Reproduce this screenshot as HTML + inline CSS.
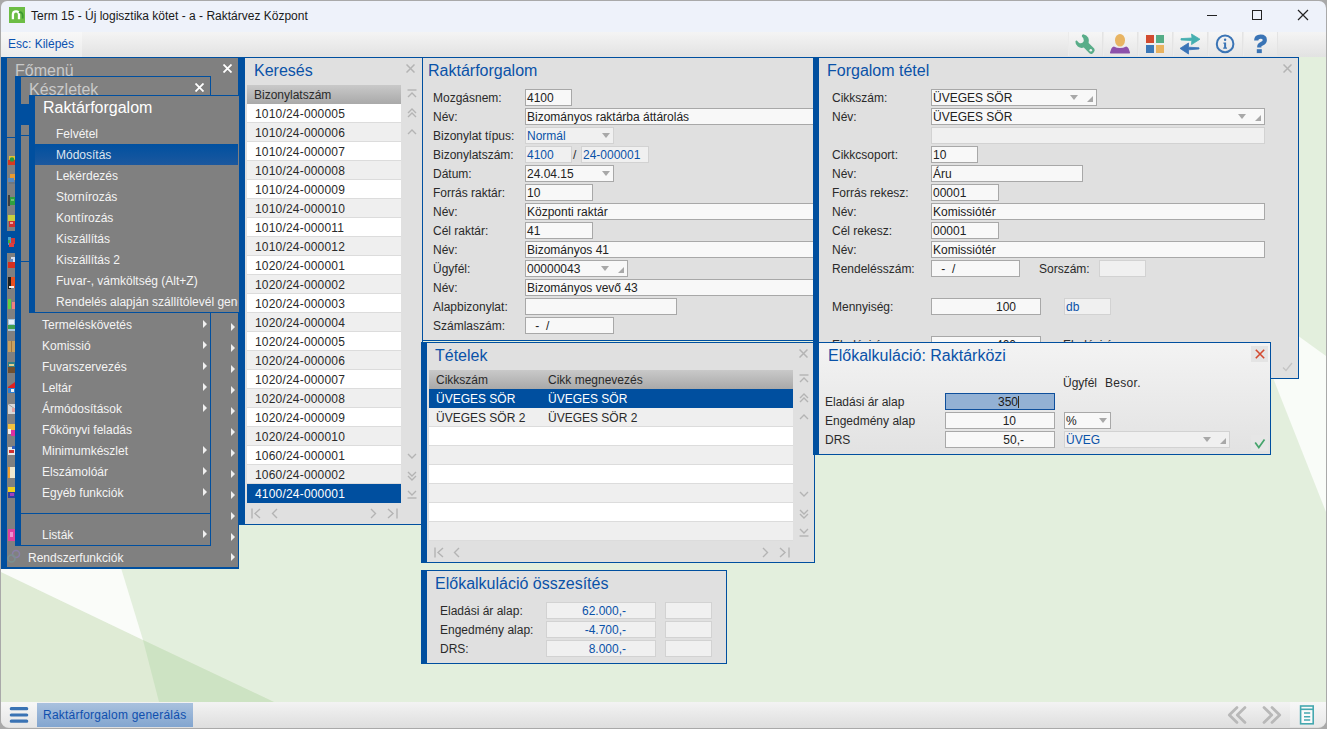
<!DOCTYPE html><html><head><meta charset="utf-8"><style>
html,body{margin:0;padding:0}
body{width:1327px;height:729px;overflow:hidden;position:relative;background:#6d6d6d;font-family:"Liberation Sans",sans-serif;font-size:12px}
div,svg{position:absolute}
.t{white-space:nowrap}
</style></head><body>
<div style="left:0px;top:0px;width:1327px;height:729px;background:#a9a9a9;"></div>
<div style="left:1px;top:1px;width:1325px;height:31px;background:#eef2fa;border-radius:6px 7px 0 0;"></div>
<div style="left:9px;top:7px;width:16px;height:16px;background:#6cbd45;"></div>
<svg style="left:9px;top:7px" width="16" height="16"><path d="M3.9 12.2V7.6Q3.9 4.3 7 4.3Q10 4.3 10 7.6V12.2" stroke="#fff" stroke-width="2.3" fill="none"/><path d="M10.2 6.2Q11 4.8 12.3 5.4Q13.7 6.2 13.7 8.2V11.5" stroke="#3c9a30" stroke-width="1.7" fill="none"/></svg>
<div class="t" style="left:31px;top:8.84px;font-size:12px;line-height:14px;color:#1a1a1a;">Term 15 - Új logisztika kötet - a - Raktárvez Központ</div>
<div style="left:1207px;top:14.6px;width:10px;height:1.3px;background:#222;"></div>
<div style="left:1252px;top:10px;width:10px;height:10px;border:1px solid #222;box-sizing:border-box;"></div>
<svg style="left:1297px;top:9px" width="12" height="12"><path d="M1 1L11 11M11 1L1 11" stroke="#222" stroke-width="1.2"/></svg>
<div style="left:1px;top:32px;width:1325px;height:25px;background:linear-gradient(#f4f4f4,#e2e2e2);"></div>
<div style="left:1px;top:32px;width:81px;height:25px;background:linear-gradient(#f8f8f8,#ebebeb);"></div>
<div class="t" style="left:8px;top:36.84px;font-size:12px;line-height:14px;color:#0b51b0;">Esc: Kilépés</div>
<div style="left:1px;top:57px;width:1325px;height:645px;background:#e3efdd;"></div>
<svg style="left:0;top:0" width="1327" height="729"><path d="M1 572L143 640L274 702L1 702Z" fill="#dfebd5"/><path d="M143 640L159 702L274 702Z" fill="#cde3c3"/><path d="M1 568L121 568L143 640L1 572Z" fill="#fafcf9"/><path d="M1290 330L1326 356L1326 512L1262 350Z" fill="#f9fcf8"/></svg>
<div style="left:1px;top:702px;width:1325px;height:26px;background:linear-gradient(#f3f3f3,#dedede);border-radius:0 0 8px 8px;"></div>
<div style="left:37px;top:703px;width:156px;height:24px;background:linear-gradient(#a9c1de,#82a5cf);"></div>
<div class="t" style="left:43px;top:707.84px;font-size:12px;line-height:14px;color:#0f4fae;letter-spacing:0.22px;">Raktárforgalom generálás</div>
<div style="left:1px;top:57px;width:238px;height:512px;background:#004f9f;"></div>
<div style="left:7px;top:58px;width:231px;height:509px;background:#808080;"></div>
<div class="t" style="left:15px;top:62.46px;font-size:16px;line-height:18px;color:#c9c9c9;">Főmenü</div>
<svg style="left:223px;top:64px" width="9" height="9"><path d="M0.5 0.5L8.5 8.5M8.5 0.5L0.5 8.5" stroke="#ffffff" stroke-width="1.8"/></svg>
<div style="left:7px;top:231px;width:8px;height:22px;background:#004f9f;"></div>
<div style="left:7px;top:137px;width:8px;height:1px;background:#004f9f;"></div>
<svg style="left:8px;top:152px;overflow:hidden" width="7" height="13"><g transform="translate(0,6)"><rect x="1" y="-2" width="6" height="6" fill="#e8c030"/><rect x="0" y="2" width="7" height="5" fill="#d83a20"/><circle cx="4" cy="1.5" r="2.3" fill="#2a9a40"/></g></svg>
<svg style="left:8px;top:173px;overflow:hidden" width="7" height="13"><g transform="translate(0,6)"><rect x="2" y="-5" width="5" height="6" fill="#e89a30"/><rect x="0" y="-1" width="6" height="4" fill="#5a8ac0"/><rect x="1" y="3" width="6" height="2" fill="#707880"/></g></svg>
<svg style="left:8px;top:194px;overflow:hidden" width="7" height="13"><g transform="translate(0,6)"><rect x="0" y="-5" width="2" height="11" fill="#404040"/><rect x="2" y="-3" width="5" height="8" fill="#30a040"/><rect x="3" y="-1" width="3" height="2" fill="#70c070"/></g></svg>
<svg style="left:8px;top:215px;overflow:hidden" width="7" height="13"><g transform="translate(0,6)"><rect x="0" y="-6" width="7" height="6" fill="#c8d040"/><rect x="1" y="0" width="6" height="6" fill="#d03030"/><rect x="2" y="1" width="3" height="2" fill="#f0a0a0"/></g></svg>
<svg style="left:8px;top:236px;overflow:hidden" width="7" height="13"><g transform="translate(0,6)"><rect x="0" y="-5" width="3" height="8" fill="#40a0d0"/><rect x="3" y="-4" width="4" height="6" fill="#d03838"/><rect x="1" y="1" width="5" height="4" fill="#e04040"/><rect x="0" y="-2" width="2" height="3" fill="#40b040"/></g></svg>
<svg style="left:8px;top:257px;overflow:hidden" width="7" height="13"><g transform="translate(0,6)"><rect x="3" y="-6" width="4" height="6" fill="#d8e0f0"/><rect x="0" y="-1" width="7" height="6" fill="#d83020"/><rect x="2" y="-4" width="3" height="3" fill="#7090c0"/></g></svg>
<svg style="left:8px;top:277px;overflow:hidden" width="7" height="13"><g transform="translate(0,6)"><rect x="0" y="-6" width="3" height="12" fill="#202020"/><rect x="3" y="-6" width="4" height="11" fill="#e85020"/><rect x="1" y="3" width="5" height="2" fill="#f0f0f0"/></g></svg>
<svg style="left:8px;top:298px;overflow:hidden" width="7" height="13"><g transform="translate(0,6)"><rect x="0" y="-5" width="3" height="10" fill="#60d040"/><rect x="4" y="-2" width="3" height="7" fill="#f08080"/></g></svg>
<svg style="left:8px;top:319px;overflow:hidden" width="7" height="13"><g transform="translate(0,6)"><rect x="0" y="-6" width="7" height="12" fill="#a8c8e0"/><rect x="0" y="0" width="7" height="4" fill="#40a050"/><rect x="1" y="-5" width="5" height="4" fill="#e8f0f8"/></g></svg>
<svg style="left:8px;top:340px;overflow:hidden" width="7" height="13"><g transform="translate(0,6)"><rect x="0" y="-5" width="7" height="11" fill="#c8a060"/><rect x="3" y="-5" width="1" height="11" fill="#a07840"/></g></svg>
<svg style="left:8px;top:361px;overflow:hidden" width="7" height="13"><g transform="translate(0,6)"><rect x="0" y="-5" width="7" height="5" fill="#30808a"/><rect x="0" y="0" width="7" height="6" fill="#705030"/><rect x="1" y="-3" width="5" height="2" fill="#e0d090"/></g></svg>
<svg style="left:8px;top:382px;overflow:hidden" width="7" height="13"><g transform="translate(0,6)"><path d="M0 -1L7 -6V1H0Z" fill="#e02020"/><rect x="0" y="0" width="7" height="5" fill="#3080d0"/><rect x="3" y="1" width="3" height="3" fill="#f0f0f0"/></g></svg>
<svg style="left:8px;top:403px;overflow:hidden" width="7" height="13"><g transform="translate(0,6)"><rect x="0" y="-5" width="7" height="10" fill="#d8d8d8"/><path d="M0 -5L7 0" stroke="#a0a0a0" stroke-width="1"/><rect x="4" y="-1" width="3" height="4" fill="#e0a0a0"/></g></svg>
<svg style="left:8px;top:424px;overflow:hidden" width="7" height="13"><g transform="translate(0,6)"><rect x="0" y="-6" width="7" height="6" fill="#f0c040"/><rect x="3" y="0" width="4" height="6" fill="#e030a0"/><rect x="0" y="-1" width="3" height="5" fill="#f0f0f0"/></g></svg>
<svg style="left:8px;top:445px;overflow:hidden" width="7" height="13"><g transform="translate(0,6)"><rect x="0" y="-4" width="7" height="8" fill="#e8e8e8"/><rect x="1" y="-1" width="5" height="3" fill="#d03030"/><rect x="4" y="-5" width="3" height="3" fill="#3060c0"/></g></svg>
<svg style="left:8px;top:466px;overflow:hidden" width="7" height="13"><g transform="translate(0,6)"><rect x="0" y="-5" width="7" height="11" fill="#f0e8d0"/><rect x="0" y="-5" width="2" height="11" fill="#f0a030"/></g></svg>
<svg style="left:8px;top:487px;overflow:hidden" width="7" height="13"><g transform="translate(0,6)"><rect x="0" y="-6" width="7" height="5" fill="#f0d020"/><rect x="0" y="-1" width="7" height="6" fill="#3040a0"/><rect x="2" y="0" width="4" height="3" fill="#a040c0"/></g></svg>
<svg style="left:8px;top:529px;overflow:hidden" width="7" height="13"><g transform="translate(0,6)"><rect x="0" y="-6" width="7" height="12" fill="#e040a0"/><rect x="2" y="-3" width="3" height="5" fill="#f090d0"/></g></svg>
<svg style="left:231px;top:323px" width="4" height="8"><path d="M0 0L4 4L0 8Z" fill="#f0f0f0"/></svg>
<svg style="left:231px;top:344px" width="4" height="8"><path d="M0 0L4 4L0 8Z" fill="#f0f0f0"/></svg>
<svg style="left:231px;top:365px" width="4" height="8"><path d="M0 0L4 4L0 8Z" fill="#f0f0f0"/></svg>
<svg style="left:231px;top:386px" width="4" height="8"><path d="M0 0L4 4L0 8Z" fill="#f0f0f0"/></svg>
<svg style="left:231px;top:407px" width="4" height="8"><path d="M0 0L4 4L0 8Z" fill="#f0f0f0"/></svg>
<svg style="left:231px;top:428px" width="4" height="8"><path d="M0 0L4 4L0 8Z" fill="#f0f0f0"/></svg>
<svg style="left:231px;top:449px" width="4" height="8"><path d="M0 0L4 4L0 8Z" fill="#f0f0f0"/></svg>
<svg style="left:231px;top:470px" width="4" height="8"><path d="M0 0L4 4L0 8Z" fill="#f0f0f0"/></svg>
<svg style="left:231px;top:491px" width="4" height="8"><path d="M0 0L4 4L0 8Z" fill="#f0f0f0"/></svg>
<svg style="left:231px;top:512px" width="4" height="8"><path d="M0 0L4 4L0 8Z" fill="#f0f0f0"/></svg>
<svg style="left:231px;top:533px" width="4" height="8"><path d="M0 0L4 4L0 8Z" fill="#f0f0f0"/></svg>
<svg style="left:231px;top:553px" width="4" height="8"><path d="M0 0L4 4L0 8Z" fill="#f0f0f0"/></svg>
<svg style="left:7px;top:549px" width="14" height="14"><circle cx="9" cy="5" r="3.5" fill="none" stroke="#8a80a8" stroke-width="1.5"/><circle cx="4.5" cy="9.5" r="3.5" fill="none" stroke="#7a9090" stroke-width="1.5"/></svg>
<div class="t" style="left:28px;top:550.84px;font-size:12px;line-height:14px;color:#f4f4f4;">Rendszerfunkciók</div>
<div style="left:15px;top:76px;width:196px;height:470px;background:#004f9f;"></div>
<div style="left:21px;top:77px;width:189px;height:468px;background:#808080;"></div>
<div class="t" style="left:29px;top:81.46px;font-size:16px;line-height:18px;color:#c9c9c9;">Készletek</div>
<svg style="left:195px;top:83px" width="9" height="9"><path d="M0.5 0.5L8.5 8.5M8.5 0.5L0.5 8.5" stroke="#ffffff" stroke-width="1.8"/></svg>
<div style="left:21px;top:104px;width:8px;height:21px;background:#004f9f;"></div>
<div style="left:21px;top:135px;width:8px;height:1px;background:#004f9f;"></div>
<div style="left:21px;top:261px;width:189px;height:1px;background:#004f9f;"></div>
<div class="t" style="left:42px;top:317.84px;font-size:12px;line-height:14px;color:#f4f4f4;">Termeléskövetés</div>
<svg style="left:203px;top:320px" width="4" height="8"><path d="M0 0L4 4L0 8Z" fill="#f0f0f0"/></svg>
<div class="t" style="left:42px;top:338.84px;font-size:12px;line-height:14px;color:#f4f4f4;">Komissió</div>
<svg style="left:203px;top:341px" width="4" height="8"><path d="M0 0L4 4L0 8Z" fill="#f0f0f0"/></svg>
<div class="t" style="left:42px;top:359.84px;font-size:12px;line-height:14px;color:#f4f4f4;">Fuvarszervezés</div>
<svg style="left:203px;top:362px" width="4" height="8"><path d="M0 0L4 4L0 8Z" fill="#f0f0f0"/></svg>
<div class="t" style="left:42px;top:380.84px;font-size:12px;line-height:14px;color:#f4f4f4;">Leltár</div>
<svg style="left:203px;top:383px" width="4" height="8"><path d="M0 0L4 4L0 8Z" fill="#f0f0f0"/></svg>
<div class="t" style="left:42px;top:401.84px;font-size:12px;line-height:14px;color:#f4f4f4;">Ármódosítások</div>
<svg style="left:203px;top:404px" width="4" height="8"><path d="M0 0L4 4L0 8Z" fill="#f0f0f0"/></svg>
<div class="t" style="left:42px;top:422.84px;font-size:12px;line-height:14px;color:#f4f4f4;">Főkönyvi feladás</div>
<div class="t" style="left:42px;top:443.84px;font-size:12px;line-height:14px;color:#f4f4f4;">Minimumkészlet</div>
<svg style="left:203px;top:446px" width="4" height="8"><path d="M0 0L4 4L0 8Z" fill="#f0f0f0"/></svg>
<div class="t" style="left:42px;top:464.84px;font-size:12px;line-height:14px;color:#f4f4f4;">Elszámolóár</div>
<svg style="left:203px;top:467px" width="4" height="8"><path d="M0 0L4 4L0 8Z" fill="#f0f0f0"/></svg>
<div class="t" style="left:42px;top:485.84px;font-size:12px;line-height:14px;color:#f4f4f4;">Egyéb funkciók</div>
<svg style="left:203px;top:488px" width="4" height="8"><path d="M0 0L4 4L0 8Z" fill="#f0f0f0"/></svg>
<div class="t" style="left:42px;top:527.84px;font-size:12px;line-height:14px;color:#f4f4f4;">Listák</div>
<svg style="left:203px;top:530px" width="4" height="8"><path d="M0 0L4 4L0 8Z" fill="#f0f0f0"/></svg>
<div style="left:21px;top:513px;width:189px;height:1px;background:#004f9f;"></div>
<div style="left:29px;top:95px;width:210px;height:218px;background:#004f9f;"></div>
<div style="left:35px;top:96px;width:204px;height:216px;background:#808080;"></div>
<div class="t" style="left:43px;top:99.46px;font-size:16px;line-height:18px;color:#ffffff;">Raktárforgalom</div>
<div style="left:35px;top:144px;width:204px;height:21px;background:linear-gradient(#0050a0,#1c589e);"></div>
<div style="left:35px;top:96px;width:204px;height:216px;overflow:hidden">
<div class="t" style="left:21px;top:30.84px;font-size:12px;line-height:14px;color:#f4f4f4">Felvétel</div>
<div class="t" style="left:21px;top:51.84px;font-size:12px;line-height:14px;color:#dfe6f0">Módosítás</div>
<div class="t" style="left:21px;top:72.84px;font-size:12px;line-height:14px;color:#f4f4f4">Lekérdezés</div>
<div class="t" style="left:21px;top:93.84px;font-size:12px;line-height:14px;color:#f4f4f4">Stornírozás</div>
<div class="t" style="left:21px;top:114.84px;font-size:12px;line-height:14px;color:#f4f4f4">Kontírozás</div>
<div class="t" style="left:21px;top:135.84px;font-size:12px;line-height:14px;color:#f4f4f4">Kiszállítás</div>
<div class="t" style="left:21px;top:156.84px;font-size:12px;line-height:14px;color:#f4f4f4">Kiszállítás 2</div>
<div class="t" style="left:21px;top:177.84px;font-size:12px;line-height:14px;color:#f4f4f4">Fuvar-, vámköltség (Alt+Z)</div>
<div class="t" style="left:21px;top:198.84px;font-size:12px;line-height:14px;color:#f4f4f4">Rendelés alapján szállítólevél generálás</div>
</div>
<div style="left:238px;top:57px;width:185px;height:468px;background:#004f9f;"></div>
<div style="left:245px;top:58px;width:177px;height:466px;background:#e0e0e0;"></div>
<div style="left:238px;top:96px;width:1px;height:216px;background:#808080;"></div>
<div class="t" style="left:254px;top:62.46px;font-size:16px;line-height:18px;color:#0a52a8;">Keresés</div>
<svg style="left:406px;top:64px" width="9" height="9"><path d="M0.5 0.5L8.5 8.5M8.5 0.5L0.5 8.5" stroke="#b4b4b4" stroke-width="1.5"/></svg>
<div style="left:247px;top:85px;width:154px;height:19px;background:linear-gradient(#c9c9c9,#a9a9a9);"></div>
<div class="t" style="left:254px;top:87.84px;font-size:12px;line-height:14px;color:#2a2a2a;">Bizonylatszám</div>
<div style="left:247px;top:104px;width:154px;height:19px;background:#ffffff;border-bottom:1px solid #dcdcdc;box-sizing:border-box;"></div>
<div class="t" style="left:255px;top:106.84px;font-size:12px;line-height:14px;color:#2a2a2a;letter-spacing:0.19px;">1010/24-000005</div>
<div style="left:247px;top:123px;width:154px;height:19px;background:#efefef;border-bottom:1px solid #dcdcdc;box-sizing:border-box;"></div>
<div class="t" style="left:255px;top:125.84px;font-size:12px;line-height:14px;color:#2a2a2a;letter-spacing:0.19px;">1010/24-000006</div>
<div style="left:247px;top:142px;width:154px;height:19px;background:#ffffff;border-bottom:1px solid #dcdcdc;box-sizing:border-box;"></div>
<div class="t" style="left:255px;top:144.84px;font-size:12px;line-height:14px;color:#2a2a2a;letter-spacing:0.19px;">1010/24-000007</div>
<div style="left:247px;top:161px;width:154px;height:19px;background:#efefef;border-bottom:1px solid #dcdcdc;box-sizing:border-box;"></div>
<div class="t" style="left:255px;top:163.84px;font-size:12px;line-height:14px;color:#2a2a2a;letter-spacing:0.19px;">1010/24-000008</div>
<div style="left:247px;top:180px;width:154px;height:19px;background:#ffffff;border-bottom:1px solid #dcdcdc;box-sizing:border-box;"></div>
<div class="t" style="left:255px;top:182.84px;font-size:12px;line-height:14px;color:#2a2a2a;letter-spacing:0.19px;">1010/24-000009</div>
<div style="left:247px;top:199px;width:154px;height:19px;background:#efefef;border-bottom:1px solid #dcdcdc;box-sizing:border-box;"></div>
<div class="t" style="left:255px;top:201.84px;font-size:12px;line-height:14px;color:#2a2a2a;letter-spacing:0.19px;">1010/24-000010</div>
<div style="left:247px;top:218px;width:154px;height:19px;background:#ffffff;border-bottom:1px solid #dcdcdc;box-sizing:border-box;"></div>
<div class="t" style="left:255px;top:220.84px;font-size:12px;line-height:14px;color:#2a2a2a;letter-spacing:0.19px;">1010/24-000011</div>
<div style="left:247px;top:237px;width:154px;height:19px;background:#efefef;border-bottom:1px solid #dcdcdc;box-sizing:border-box;"></div>
<div class="t" style="left:255px;top:239.84px;font-size:12px;line-height:14px;color:#2a2a2a;letter-spacing:0.19px;">1010/24-000012</div>
<div style="left:247px;top:256px;width:154px;height:19px;background:#ffffff;border-bottom:1px solid #dcdcdc;box-sizing:border-box;"></div>
<div class="t" style="left:255px;top:258.84px;font-size:12px;line-height:14px;color:#2a2a2a;letter-spacing:0.19px;">1020/24-000001</div>
<div style="left:247px;top:275px;width:154px;height:19px;background:#efefef;border-bottom:1px solid #dcdcdc;box-sizing:border-box;"></div>
<div class="t" style="left:255px;top:277.84px;font-size:12px;line-height:14px;color:#2a2a2a;letter-spacing:0.19px;">1020/24-000002</div>
<div style="left:247px;top:294px;width:154px;height:19px;background:#ffffff;border-bottom:1px solid #dcdcdc;box-sizing:border-box;"></div>
<div class="t" style="left:255px;top:296.84px;font-size:12px;line-height:14px;color:#2a2a2a;letter-spacing:0.19px;">1020/24-000003</div>
<div style="left:247px;top:313px;width:154px;height:19px;background:#efefef;border-bottom:1px solid #dcdcdc;box-sizing:border-box;"></div>
<div class="t" style="left:255px;top:315.84px;font-size:12px;line-height:14px;color:#2a2a2a;letter-spacing:0.19px;">1020/24-000004</div>
<div style="left:247px;top:332px;width:154px;height:19px;background:#ffffff;border-bottom:1px solid #dcdcdc;box-sizing:border-box;"></div>
<div class="t" style="left:255px;top:334.84px;font-size:12px;line-height:14px;color:#2a2a2a;letter-spacing:0.19px;">1020/24-000005</div>
<div style="left:247px;top:351px;width:154px;height:19px;background:#efefef;border-bottom:1px solid #dcdcdc;box-sizing:border-box;"></div>
<div class="t" style="left:255px;top:353.84px;font-size:12px;line-height:14px;color:#2a2a2a;letter-spacing:0.19px;">1020/24-000006</div>
<div style="left:247px;top:370px;width:154px;height:19px;background:#ffffff;border-bottom:1px solid #dcdcdc;box-sizing:border-box;"></div>
<div class="t" style="left:255px;top:372.84px;font-size:12px;line-height:14px;color:#2a2a2a;letter-spacing:0.19px;">1020/24-000007</div>
<div style="left:247px;top:389px;width:154px;height:19px;background:#efefef;border-bottom:1px solid #dcdcdc;box-sizing:border-box;"></div>
<div class="t" style="left:255px;top:391.84px;font-size:12px;line-height:14px;color:#2a2a2a;letter-spacing:0.19px;">1020/24-000008</div>
<div style="left:247px;top:408px;width:154px;height:19px;background:#ffffff;border-bottom:1px solid #dcdcdc;box-sizing:border-box;"></div>
<div class="t" style="left:255px;top:410.84px;font-size:12px;line-height:14px;color:#2a2a2a;letter-spacing:0.19px;">1020/24-000009</div>
<div style="left:247px;top:427px;width:154px;height:19px;background:#efefef;border-bottom:1px solid #dcdcdc;box-sizing:border-box;"></div>
<div class="t" style="left:255px;top:429.84px;font-size:12px;line-height:14px;color:#2a2a2a;letter-spacing:0.19px;">1020/24-000010</div>
<div style="left:247px;top:446px;width:154px;height:19px;background:#ffffff;border-bottom:1px solid #dcdcdc;box-sizing:border-box;"></div>
<div class="t" style="left:255px;top:448.84px;font-size:12px;line-height:14px;color:#2a2a2a;letter-spacing:0.19px;">1060/24-000001</div>
<div style="left:247px;top:465px;width:154px;height:19px;background:#efefef;border-bottom:1px solid #dcdcdc;box-sizing:border-box;"></div>
<div class="t" style="left:255px;top:467.84px;font-size:12px;line-height:14px;color:#2a2a2a;letter-spacing:0.19px;">1060/24-000002</div>
<div style="left:247px;top:484px;width:154px;height:19px;background:#004f9f;"></div>
<div class="t" style="left:255px;top:486.84px;font-size:12px;line-height:14px;color:#ffffff;letter-spacing:0.19px;">4100/24-000001</div>
<svg style="left:407px;top:89px" width="10" height="10"><path d="M0.5 1H9.5" stroke="#b4b4b4" stroke-width="1.4"/><path d="M1 8L5 4L9 8" stroke="#b4b4b4" stroke-width="1.4" fill="none"/></svg><svg style="left:407px;top:108px" width="10" height="10"><path d="M1 5L5 1L9 5M1 9L5 5L9 9" stroke="#b4b4b4" stroke-width="1.4" fill="none"/></svg><svg style="left:407px;top:129px" width="10" height="6"><path d="M1 5L5 1L9 5" stroke="#b4b4b4" stroke-width="1.4" fill="none"/></svg><svg style="left:407px;top:453px" width="10" height="6"><path d="M1 1L5 5L9 1" stroke="#b4b4b4" stroke-width="1.4" fill="none"/></svg><svg style="left:407px;top:470.5px" width="10" height="10"><path d="M1 1L5 5L9 1M1 5L5 9L9 5" stroke="#b4b4b4" stroke-width="1.4" fill="none"/></svg><svg style="left:407px;top:488.5px" width="10" height="10"><path d="M1 2L5 6L9 2" stroke="#b4b4b4" stroke-width="1.4" fill="none"/><path d="M0.5 9H9.5" stroke="#b4b4b4" stroke-width="1.4"/></svg>
<svg style="left:250px;top:508px" width="12" height="11"><path d="M2 0.5V10.5" stroke="#b4b4b4" stroke-width="1.4"/><path d="M10 1L5 5.5L10 10" stroke="#b4b4b4" stroke-width="1.4" fill="none"/></svg>
<svg style="left:271px;top:508px" width="8" height="11"><path d="M6 1L1.5 5.5L6 10" stroke="#b4b4b4" stroke-width="1.4" fill="none"/></svg>
<svg style="left:369px;top:508px" width="8" height="11"><path d="M2 1L6.5 5.5L2 10" stroke="#b4b4b4" stroke-width="1.4" fill="none"/></svg>
<svg style="left:386px;top:508px" width="12" height="11"><path d="M2 1L7 5.5L2 10" stroke="#b4b4b4" stroke-width="1.4" fill="none"/><path d="M11 0.5V10.5" stroke="#b4b4b4" stroke-width="1.4"/></svg>
<div style="left:422px;top:57px;width:397px;height:284px;background:#004f9f;"></div>
<div style="left:423px;top:58px;width:396px;height:282px;background:#e0e0e0;"></div>
<div class="t" style="left:428px;top:62.46px;font-size:16px;line-height:18px;color:#0a52a8;">Raktárforgalom</div>
<div class="t" style="left:433px;top:90.84px;font-size:12px;line-height:14px;color:#2a2a2a;">Mozgásnem:</div>
<div class="t" style="left:433px;top:109.84px;font-size:12px;line-height:14px;color:#2a2a2a;">Név:</div>
<div class="t" style="left:433px;top:128.84px;font-size:12px;line-height:14px;color:#2a2a2a;">Bizonylat típus:</div>
<div class="t" style="left:433px;top:147.84px;font-size:12px;line-height:14px;color:#2a2a2a;">Bizonylatszám:</div>
<div class="t" style="left:433px;top:166.84px;font-size:12px;line-height:14px;color:#2a2a2a;">Dátum:</div>
<div class="t" style="left:433px;top:185.84px;font-size:12px;line-height:14px;color:#2a2a2a;">Forrás raktár:</div>
<div class="t" style="left:433px;top:204.84px;font-size:12px;line-height:14px;color:#2a2a2a;">Név:</div>
<div class="t" style="left:433px;top:223.84px;font-size:12px;line-height:14px;color:#2a2a2a;">Cél raktár:</div>
<div class="t" style="left:433px;top:242.84px;font-size:12px;line-height:14px;color:#2a2a2a;">Név:</div>
<div class="t" style="left:433px;top:261.84px;font-size:12px;line-height:14px;color:#2a2a2a;">Ügyfél:</div>
<div class="t" style="left:433px;top:280.84px;font-size:12px;line-height:14px;color:#2a2a2a;">Név:</div>
<div class="t" style="left:433px;top:299.84px;font-size:12px;line-height:14px;color:#2a2a2a;">Alapbizonylat:</div>
<div class="t" style="left:433px;top:318.84px;font-size:12px;line-height:14px;color:#2a2a2a;">Számlaszám:</div>
<div style="left:525px;top:89px;width:47px;height:17px;background:#f8f8f8;border:1px solid #a8a8a8;box-sizing:border-box;"></div>
<div class="t" style="left:527px;top:90.84px;font-size:12px;line-height:14px;color:#222;">4100</div>
<div style="left:525px;top:108px;width:300px;height:17px;background:#f8f8f8;border:1px solid #a8a8a8;box-sizing:border-box;"></div>
<div class="t" style="left:527px;top:109.84px;font-size:12px;line-height:14px;color:#222;">Bizományos raktárba áttárolás</div>
<div style="left:525px;top:127px;width:89px;height:17px;background:#f0f0f0;border:1px solid #d2d2d2;box-sizing:border-box;"></div>
<div class="t" style="left:527px;top:128.84px;font-size:12px;line-height:14px;color:#0a52a8;">Normál</div>
<svg style="left:602px;top:133px" width="8" height="5"><path d="M0 0H8L4.0 5Z" fill="#a8a8a8"/></svg>
<div style="left:525px;top:146px;width:47px;height:17px;background:#f0f0f0;border:1px solid #d2d2d2;box-sizing:border-box;"></div>
<div class="t" style="left:527px;top:147.84px;font-size:12px;line-height:14px;color:#0a52a8;">4100</div>
<div class="t" style="left:573px;top:147.84px;font-size:12px;line-height:14px;color:#2a2a2a;">/</div>
<div style="left:581px;top:146px;width:68px;height:17px;background:#f0f0f0;border:1px solid #d2d2d2;box-sizing:border-box;"></div>
<div class="t" style="left:583px;top:147.84px;font-size:12px;line-height:14px;color:#0a52a8;">24-000001</div>
<div style="left:525px;top:165px;width:89px;height:17px;background:#f8f8f8;border:1px solid #a8a8a8;box-sizing:border-box;"></div>
<div class="t" style="left:527px;top:166.84px;font-size:12px;line-height:14px;color:#222;">24.04.15</div>
<svg style="left:602px;top:171px" width="8" height="5"><path d="M0 0H8L4.0 5Z" fill="#a8a8a8"/></svg>
<div style="left:525px;top:184px;width:68px;height:17px;background:#f8f8f8;border:1px solid #a8a8a8;box-sizing:border-box;"></div>
<div class="t" style="left:527px;top:185.84px;font-size:12px;line-height:14px;color:#222;">10</div>
<div style="left:525px;top:203px;width:300px;height:17px;background:#f8f8f8;border:1px solid #a8a8a8;box-sizing:border-box;"></div>
<div class="t" style="left:527px;top:204.84px;font-size:12px;line-height:14px;color:#222;">Központi raktár</div>
<div style="left:525px;top:222px;width:68px;height:17px;background:#f8f8f8;border:1px solid #a8a8a8;box-sizing:border-box;"></div>
<div class="t" style="left:527px;top:223.84px;font-size:12px;line-height:14px;color:#222;">41</div>
<div style="left:525px;top:241px;width:300px;height:17px;background:#f8f8f8;border:1px solid #a8a8a8;box-sizing:border-box;"></div>
<div class="t" style="left:527px;top:242.84px;font-size:12px;line-height:14px;color:#222;">Bizományos 41</div>
<div style="left:525px;top:260px;width:103px;height:17px;background:#f8f8f8;border:1px solid #a8a8a8;box-sizing:border-box;"></div>
<div class="t" style="left:527px;top:261.84px;font-size:12px;line-height:14px;color:#222;">00000043</div>
<svg style="left:601px;top:266px" width="8" height="5"><path d="M0 0H8L4.0 5Z" fill="#a8a8a8"/></svg>
<svg style="left:618px;top:267px" width="6" height="6"><path d="M6 0V6H0Z" fill="#a8a8a8"/></svg>
<div style="left:525px;top:279px;width:300px;height:17px;background:#f8f8f8;border:1px solid #a8a8a8;box-sizing:border-box;"></div>
<div class="t" style="left:527px;top:280.84px;font-size:12px;line-height:14px;color:#222;">Bizományos vevő 43</div>
<div style="left:525px;top:298px;width:152px;height:17px;background:#f8f8f8;border:1px solid #a8a8a8;box-sizing:border-box;"></div>
<div style="left:525px;top:317px;width:89px;height:17px;background:#f8f8f8;border:1px solid #a8a8a8;box-sizing:border-box;"></div>
<div class="t" style="left:532px;top:318.84px;font-size:12px;line-height:14px;color:#222;">&nbsp;-&nbsp;&nbsp;/</div>
<div style="left:813px;top:57px;width:486px;height:322px;background:#004f9f;"></div>
<div style="left:819px;top:58px;width:479px;height:320px;background:#e0e0e0;"></div>
<div class="t" style="left:827px;top:62.46px;font-size:16px;line-height:18px;color:#0a52a8;">Forgalom tétel</div>
<svg style="left:1283px;top:64px" width="9" height="9"><path d="M0.5 0.5L8.5 8.5M8.5 0.5L0.5 8.5" stroke="#b4b4b4" stroke-width="1.5"/></svg>
<div class="t" style="left:832px;top:90.84px;font-size:12px;line-height:14px;color:#2a2a2a;">Cikkszám:</div>
<div class="t" style="left:832px;top:109.84px;font-size:12px;line-height:14px;color:#2a2a2a;">Név:</div>
<div class="t" style="left:832px;top:147.84px;font-size:12px;line-height:14px;color:#2a2a2a;">Cikkcsoport:</div>
<div class="t" style="left:832px;top:166.84px;font-size:12px;line-height:14px;color:#2a2a2a;">Név:</div>
<div class="t" style="left:832px;top:185.84px;font-size:12px;line-height:14px;color:#2a2a2a;">Forrás rekesz:</div>
<div class="t" style="left:832px;top:204.84px;font-size:12px;line-height:14px;color:#2a2a2a;">Név:</div>
<div class="t" style="left:832px;top:223.84px;font-size:12px;line-height:14px;color:#2a2a2a;">Cél rekesz:</div>
<div class="t" style="left:832px;top:242.84px;font-size:12px;line-height:14px;color:#2a2a2a;">Név:</div>
<div class="t" style="left:832px;top:261.84px;font-size:12px;line-height:14px;color:#2a2a2a;">Rendelésszám:</div>
<div style="left:931px;top:89px;width:166px;height:17px;background:#f8f8f8;border:1px solid #a8a8a8;box-sizing:border-box;"></div>
<div class="t" style="left:933px;top:90.84px;font-size:12px;line-height:14px;color:#222;">ÜVEGES SÖR</div>
<svg style="left:1070px;top:95px" width="8" height="5"><path d="M0 0H8L4.0 5Z" fill="#a8a8a8"/></svg>
<svg style="left:1087px;top:96px" width="6" height="6"><path d="M6 0V6H0Z" fill="#a8a8a8"/></svg>
<div style="left:931px;top:108px;width:334px;height:17px;background:#f8f8f8;border:1px solid #a8a8a8;box-sizing:border-box;"></div>
<div class="t" style="left:933px;top:109.84px;font-size:12px;line-height:14px;color:#222;">ÜVEGES SÖR</div>
<svg style="left:1238px;top:114px" width="8" height="5"><path d="M0 0H8L4.0 5Z" fill="#a8a8a8"/></svg>
<svg style="left:1255px;top:115px" width="6" height="6"><path d="M6 0V6H0Z" fill="#a8a8a8"/></svg>
<div style="left:931px;top:127px;width:334px;height:17px;background:#f0f0f0;border:1px solid #d2d2d2;box-sizing:border-box;"></div>
<div style="left:931px;top:146px;width:47px;height:17px;background:#f8f8f8;border:1px solid #a8a8a8;box-sizing:border-box;"></div>
<div class="t" style="left:933px;top:147.84px;font-size:12px;line-height:14px;color:#222;">10</div>
<div style="left:931px;top:165px;width:152px;height:17px;background:#f8f8f8;border:1px solid #a8a8a8;box-sizing:border-box;"></div>
<div class="t" style="left:933px;top:166.84px;font-size:12px;line-height:14px;color:#222;">Áru</div>
<div style="left:931px;top:184px;width:68px;height:17px;background:#f8f8f8;border:1px solid #a8a8a8;box-sizing:border-box;"></div>
<div class="t" style="left:933px;top:185.84px;font-size:12px;line-height:14px;color:#222;">00001</div>
<div style="left:931px;top:203px;width:334px;height:17px;background:#f8f8f8;border:1px solid #a8a8a8;box-sizing:border-box;"></div>
<div class="t" style="left:933px;top:204.84px;font-size:12px;line-height:14px;color:#222;">Komissiótér</div>
<div style="left:931px;top:222px;width:68px;height:17px;background:#f8f8f8;border:1px solid #a8a8a8;box-sizing:border-box;"></div>
<div class="t" style="left:933px;top:223.84px;font-size:12px;line-height:14px;color:#222;">00001</div>
<div style="left:931px;top:241px;width:334px;height:17px;background:#f8f8f8;border:1px solid #a8a8a8;box-sizing:border-box;"></div>
<div class="t" style="left:933px;top:242.84px;font-size:12px;line-height:14px;color:#222;">Komissiótér</div>
<div style="left:931px;top:260px;width:89px;height:17px;background:#f8f8f8;border:1px solid #a8a8a8;box-sizing:border-box;"></div>
<div class="t" style="left:938px;top:261.84px;font-size:12px;line-height:14px;color:#222;">&nbsp;-&nbsp;&nbsp;/</div>
<div class="t" style="left:1039px;top:261.84px;font-size:12px;line-height:14px;color:#2a2a2a;">Sorszám:</div>
<div style="left:1099px;top:260px;width:47px;height:17px;background:#f0f0f0;border:1px solid #d2d2d2;box-sizing:border-box;"></div>
<div class="t" style="left:832px;top:299.84px;font-size:12px;line-height:14px;color:#2a2a2a;">Mennyiség:</div>
<div style="left:931px;top:298px;width:110px;height:17px;background:#f8f8f8;border:1px solid #a8a8a8;box-sizing:border-box;"></div>
<div class="t" style="right:311px;top:299.84px;font-size:12px;line-height:14px;color:#222;text-align:right;">100</div>
<div style="left:1064px;top:298px;width:47px;height:17px;background:#f0f0f0;border:1px solid #d2d2d2;box-sizing:border-box;"></div>
<div class="t" style="left:1066px;top:299.84px;font-size:12px;line-height:14px;color:#0a52a8;">db</div>
<div class="t" style="left:832px;top:337.84px;font-size:12px;line-height:14px;color:#2a2a2a;">Eladási ár:</div>
<div style="left:931px;top:336px;width:110px;height:17px;background:#f8f8f8;border:1px solid #a8a8a8;box-sizing:border-box;"></div>
<div class="t" style="right:311px;top:337.84px;font-size:12px;line-height:14px;color:#222;text-align:right;">400</div>
<div class="t" style="left:1063px;top:337.84px;font-size:12px;line-height:14px;color:#2a2a2a;">Eladási ár</div>
<svg style="left:1282px;top:362px" width="11" height="10"><path d="M1 5.5L4 8.5L10 1" stroke="#c4c4c4" stroke-width="1.3" fill="none"/></svg>
<div style="left:421px;top:342px;width:394px;height:221px;background:#004f9f;"></div>
<div style="left:427px;top:343px;width:387px;height:219px;background:#e0e0e0;"></div>
<div class="t" style="left:435px;top:347.46px;font-size:16px;line-height:18px;color:#0a52a8;">Tételek</div>
<svg style="left:799px;top:349px" width="9" height="9"><path d="M0.5 0.5L8.5 8.5M8.5 0.5L0.5 8.5" stroke="#b4b4b4" stroke-width="1.5"/></svg>
<div style="left:429px;top:370px;width:364px;height:19px;background:linear-gradient(#c9c9c9,#a9a9a9);"></div>
<div class="t" style="left:436px;top:372.84px;font-size:12px;line-height:14px;color:#2a2a2a;">Cikkszám</div>
<div class="t" style="left:548px;top:372.84px;font-size:12px;line-height:14px;color:#2a2a2a;">Cikk megnevezés</div>
<div style="left:429px;top:389px;width:364px;height:19px;background:#004f9f;"></div>
<div class="t" style="left:436px;top:391.84px;font-size:12px;line-height:14px;color:#ffffff;">ÜVEGES SÖR</div>
<div class="t" style="left:548px;top:391.84px;font-size:12px;line-height:14px;color:#ffffff;">ÜVEGES SÖR</div>
<div style="left:429px;top:408px;width:364px;height:19px;background:#efefef;border-bottom:1px solid #dcdcdc;box-sizing:border-box;"></div>
<div class="t" style="left:436px;top:410.84px;font-size:12px;line-height:14px;color:#2a2a2a;">ÜVEGES SÖR 2</div>
<div class="t" style="left:548px;top:410.84px;font-size:12px;line-height:14px;color:#2a2a2a;">ÜVEGES SÖR 2</div>
<div style="left:429px;top:427px;width:364px;height:19px;background:#ffffff;border-bottom:1px solid #dcdcdc;box-sizing:border-box;"></div>
<div style="left:429px;top:446px;width:364px;height:19px;background:#efefef;border-bottom:1px solid #dcdcdc;box-sizing:border-box;"></div>
<div style="left:429px;top:465px;width:364px;height:19px;background:#ffffff;border-bottom:1px solid #dcdcdc;box-sizing:border-box;"></div>
<div style="left:429px;top:484px;width:364px;height:19px;background:#efefef;border-bottom:1px solid #dcdcdc;box-sizing:border-box;"></div>
<div style="left:429px;top:503px;width:364px;height:19px;background:#ffffff;border-bottom:1px solid #dcdcdc;box-sizing:border-box;"></div>
<div style="left:429px;top:522px;width:364px;height:19px;background:#efefef;border-bottom:1px solid #dcdcdc;box-sizing:border-box;"></div>
<svg style="left:799px;top:374px" width="10" height="10"><path d="M0.5 1H9.5" stroke="#b4b4b4" stroke-width="1.4"/><path d="M1 8L5 4L9 8" stroke="#b4b4b4" stroke-width="1.4" fill="none"/></svg><svg style="left:799px;top:393px" width="10" height="10"><path d="M1 5L5 1L9 5M1 9L5 5L9 9" stroke="#b4b4b4" stroke-width="1.4" fill="none"/></svg><svg style="left:799px;top:414px" width="10" height="6"><path d="M1 5L5 1L9 5" stroke="#b4b4b4" stroke-width="1.4" fill="none"/></svg><svg style="left:799px;top:491px" width="10" height="6"><path d="M1 1L5 5L9 1" stroke="#b4b4b4" stroke-width="1.4" fill="none"/></svg><svg style="left:799px;top:508.5px" width="10" height="10"><path d="M1 1L5 5L9 1M1 5L5 9L9 5" stroke="#b4b4b4" stroke-width="1.4" fill="none"/></svg><svg style="left:799px;top:526.5px" width="10" height="10"><path d="M1 2L5 6L9 2" stroke="#b4b4b4" stroke-width="1.4" fill="none"/><path d="M0.5 9H9.5" stroke="#b4b4b4" stroke-width="1.4"/></svg>
<svg style="left:433px;top:547px" width="12" height="11"><path d="M2 0.5V10.5" stroke="#b4b4b4" stroke-width="1.4"/><path d="M10 1L5 5.5L10 10" stroke="#b4b4b4" stroke-width="1.4" fill="none"/></svg>
<svg style="left:453px;top:547px" width="8" height="11"><path d="M6 1L1.5 5.5L6 10" stroke="#b4b4b4" stroke-width="1.4" fill="none"/></svg>
<svg style="left:761px;top:547px" width="8" height="11"><path d="M2 1L6.5 5.5L2 10" stroke="#b4b4b4" stroke-width="1.4" fill="none"/></svg>
<svg style="left:778px;top:547px" width="12" height="11"><path d="M2 1L7 5.5L2 10" stroke="#b4b4b4" stroke-width="1.4" fill="none"/><path d="M11 0.5V10.5" stroke="#b4b4b4" stroke-width="1.4"/></svg>
<div style="left:813px;top:342px;width:458px;height:113px;background:#004f9f;"></div>
<div style="left:819px;top:343px;width:451px;height:111px;background:linear-gradient(#f3f3f3,#e2e2e2);"></div>
<div class="t" style="left:828px;top:347.46px;font-size:16px;line-height:18px;color:#0a52a8;">Előkalkuláció: Raktárközi</div>
<div style="left:1251px;top:346px;width:17px;height:16px;background:#e4e4e4;"></div>
<svg style="left:1254.5px;top:348.5px" width="10" height="10"><path d="M0.8 0.8L9.2 9.2M9.2 0.8L0.8 9.2" stroke="#d34a30" stroke-width="1.6"/></svg>
<div style="left:1251px;top:435px;width:17px;height:16px;background:#e6e6e6;"></div>
<svg style="left:1254px;top:438px" width="12" height="11"><path d="M1.2 4.5L4.8 9.5L10.5 1.5" stroke="#45a46c" stroke-width="1.7" fill="none"/></svg>
<div class="t" style="left:1063px;top:375.84px;font-size:12px;line-height:14px;color:#2a2a2a;">Ügyfél</div>
<div class="t" style="left:1105px;top:375.84px;font-size:12px;line-height:14px;color:#2a2a2a;letter-spacing:0.3px;">Besor.</div>
<div class="t" style="left:825px;top:394.84px;font-size:12px;line-height:14px;color:#2a2a2a;">Eladási ár alap</div>
<div class="t" style="left:825px;top:413.84px;font-size:12px;line-height:14px;color:#2a2a2a;">Engedmény alap</div>
<div class="t" style="left:825px;top:432.84px;font-size:12px;line-height:14px;color:#2a2a2a;">DRS</div>
<div style="left:945px;top:393px;width:110px;height:17px;background:#93b1d4;border:1px solid #0e4f9c;box-sizing:border-box;"></div>
<div class="t" style="right:309px;top:394.84px;font-size:12px;line-height:14px;color:#1a1a1a;text-align:right;">350</div>
<div style="left:1018px;top:396px;width:1px;height:12px;background:#3a2a10;"></div>
<div style="left:945px;top:412px;width:110px;height:17px;background:#f8f8f8;border:1px solid #a8a8a8;box-sizing:border-box;"></div>
<div class="t" style="right:311px;top:413.84px;font-size:12px;line-height:14px;color:#222;text-align:right;">10</div>
<div style="left:945px;top:431px;width:110px;height:17px;background:#f8f8f8;border:1px solid #a8a8a8;box-sizing:border-box;"></div>
<div class="t" style="right:303px;top:432.84px;font-size:12px;line-height:14px;color:#222;text-align:right;">50,-</div>
<div style="left:1064px;top:412px;width:47px;height:17px;background:#f8f8f8;border:1px solid #a8a8a8;box-sizing:border-box;"></div>
<div class="t" style="left:1066px;top:413.84px;font-size:12px;line-height:14px;color:#222;">%</div>
<svg style="left:1099px;top:418px" width="8" height="5"><path d="M0 0H8L4.0 5Z" fill="#a8a8a8"/></svg>
<div style="left:1064px;top:431px;width:166px;height:17px;background:#f0f0f0;border:1px solid #d2d2d2;box-sizing:border-box;"></div>
<div class="t" style="left:1066px;top:432.84px;font-size:12px;line-height:14px;color:#0a52a8;">ÜVEG</div>
<svg style="left:1203px;top:437px" width="8" height="5"><path d="M0 0H8L4.0 5Z" fill="#a8a8a8"/></svg>
<svg style="left:1220px;top:438px" width="6" height="6"><path d="M6 0V6H0Z" fill="#a8a8a8"/></svg>
<div style="left:421px;top:570px;width:306px;height:94px;background:#004f9f;"></div>
<div style="left:427px;top:571px;width:299px;height:92px;background:#e0e0e0;"></div>
<div class="t" style="left:435px;top:575.46px;font-size:16px;line-height:18px;color:#0a52a8;">Előkalkuláció összesítés</div>
<div class="t" style="left:440px;top:603.84px;font-size:12px;line-height:14px;color:#2a2a2a;">Eladási ár alap:</div>
<div style="left:546px;top:602px;width:110px;height:17px;background:#f0f0f0;border:1px solid #d2d2d2;box-sizing:border-box;"></div>
<div class="t" style="right:701px;top:603.84px;font-size:12px;line-height:14px;color:#0a52a8;text-align:right;">62.000,-</div>
<div style="left:665px;top:602px;width:47px;height:17px;background:#f0f0f0;border:1px solid #d2d2d2;box-sizing:border-box;"></div>
<div class="t" style="left:440px;top:622.84px;font-size:12px;line-height:14px;color:#2a2a2a;">Engedmény alap:</div>
<div style="left:546px;top:621px;width:110px;height:17px;background:#f0f0f0;border:1px solid #d2d2d2;box-sizing:border-box;"></div>
<div class="t" style="right:701px;top:622.84px;font-size:12px;line-height:14px;color:#0a52a8;text-align:right;">-4.700,-</div>
<div style="left:665px;top:621px;width:47px;height:17px;background:#f0f0f0;border:1px solid #d2d2d2;box-sizing:border-box;"></div>
<div class="t" style="left:440px;top:641.84px;font-size:12px;line-height:14px;color:#2a2a2a;">DRS:</div>
<div style="left:546px;top:640px;width:110px;height:17px;background:#f0f0f0;border:1px solid #d2d2d2;box-sizing:border-box;"></div>
<div class="t" style="right:701px;top:641.84px;font-size:12px;line-height:14px;color:#0a52a8;text-align:right;">8.000,-</div>
<div style="left:665px;top:640px;width:47px;height:17px;background:#f0f0f0;border:1px solid #d2d2d2;box-sizing:border-box;"></div>
<div style="left:1068px;top:32px;width:35px;height:24px;background:linear-gradient(#f6f6f6,#e6e6e6);border-left:1px solid #ebebeb;border-right:1px solid #e4e4e4;box-sizing:border-box;"></div>
<div style="left:1103px;top:32px;width:35px;height:24px;background:linear-gradient(#f6f6f6,#e6e6e6);border-left:1px solid #ebebeb;border-right:1px solid #e4e4e4;box-sizing:border-box;"></div>
<div style="left:1138px;top:32px;width:35px;height:24px;background:linear-gradient(#f6f6f6,#e6e6e6);border-left:1px solid #ebebeb;border-right:1px solid #e4e4e4;box-sizing:border-box;"></div>
<div style="left:1173px;top:32px;width:35px;height:24px;background:linear-gradient(#f6f6f6,#e6e6e6);border-left:1px solid #ebebeb;border-right:1px solid #e4e4e4;box-sizing:border-box;"></div>
<div style="left:1208px;top:32px;width:35px;height:24px;background:linear-gradient(#f6f6f6,#e6e6e6);border-left:1px solid #ebebeb;border-right:1px solid #e4e4e4;box-sizing:border-box;"></div>
<div style="left:1243px;top:32px;width:35px;height:24px;background:linear-gradient(#f6f6f6,#e6e6e6);border-left:1px solid #ebebeb;border-right:1px solid #e4e4e4;box-sizing:border-box;"></div>
<svg style="left:0;top:0" width="1327" height="60"><path d="M1083.2 34.3Q1086.8 35 1088.3 37.8Q1089.4 40.5 1088.6 43L1094.2 48.6Q1095.4 50.4 1094 52L1092.6 53.4Q1091 54.6 1089.4 53.2L1083.8 47.6Q1080.5 48.5 1077.8 46.6Q1075.2 44.5 1075.4 41.6Q1075.8 40.4 1076.8 40.6L1078.6 42.4Q1080.8 44.2 1082.8 42.6Q1084.4 40.8 1083.4 38.6L1081.8 36.2Q1081.6 34.6 1083.2 34.3Z" fill="#59ad89"/><circle cx="1090.8" cy="50.2" r="1.3" fill="#f2f2f2"/><ellipse cx="1120" cy="40.3" rx="5" ry="6.3" fill="#e8b462"/><path d="M1113.8 46.4Q1120 49.4 1126.2 46.4Q1127.8 46.6 1128.6 48.6L1130 52.6Q1130.3 53.6 1129.2 53.6H1110.8Q1109.7 53.6 1110 52.6L1111.4 48.6Q1112.2 46.6 1113.8 46.4Z" fill="#8d50ab"/><rect x="1146" y="35" width="8" height="8" fill="#d24b2f"/><rect x="1156" y="35" width="8" height="8" fill="#55ad86"/><rect x="1146" y="45" width="8" height="8" fill="#3b78b8"/><rect x="1156" y="45" width="8" height="8" fill="#e9b25e"/><path d="M1181 38.6 L1192 38 L1191.5 34 L1200 39.2 L1191.5 44.6 L1191.8 40.6 L1181 40 Z" fill="#45afb0" stroke="#45afb0" stroke-width="0.8" stroke-linejoin="round"/><path d="M1199 47.8 L1188.5 47.2 L1188.5 43 L1180 48.4 L1188.5 54 L1188.5 49.8 L1199 49 Z" fill="#3a74b8" stroke="#3a74b8" stroke-width="0.8" stroke-linejoin="round"/><circle cx="1225.1" cy="43.9" r="8.3" fill="none" stroke="#3a74b5" stroke-width="2"/><circle cx="1225.1" cy="39.8" r="1.2" fill="#3a74b5"/><path d="M1223.4 42.6 H1226.1 V47.6 H1227 V48.8 H1223.2 V47.6 H1224.1 V43.8 H1223.4 Z" fill="#3a74b5"/></svg>
<svg style="left:0;top:0" width="1327" height="60"><path d="M1256.2 40.6 Q1256.2 36.6 1260.6 36.6 Q1264.8 36.6 1264.8 40 Q1264.8 42.3 1262 43.6 Q1259.3 44.8 1259.3 46.2 V47.6" stroke="#3a74b5" stroke-width="4.2" fill="none"/><rect x="1256.8" y="49.2" width="5" height="3.9" fill="#3a74b5"/></svg>
<div style="left:1px;top:702px;width:36px;height:25px;background:linear-gradient(#f7f7f7,#e6e6e6);border-radius:0 0 0 7px;"></div>
<div style="left:1290px;top:702px;width:36px;height:25px;background:linear-gradient(#f7f7f7,#e8e8e8);border-radius:0 0 7px 0;"></div>
<svg style="left:0;top:700px" width="1327" height="29"><path d="M11.3 8.7H26.7M11.3 15H26.7M11.3 21.2H26.7" stroke="#3a73b4" stroke-width="3.2" stroke-linecap="round"/><path d="M1237 7.6L1229.3 15L1237 22.4M1245 7.6L1237.3 15L1245 22.4" stroke="#b8b8b8" stroke-width="2.8" fill="none" stroke-linecap="round" stroke-linejoin="round"/><path d="M1264 7.6L1271.7 15L1264 22.4M1272 7.6L1279.7 15L1272 22.4" stroke="#b8b8b8" stroke-width="2.8" fill="none" stroke-linecap="round" stroke-linejoin="round"/><rect x="1300.6" y="6" width="12.6" height="17.8" fill="#fafafa" stroke="#45a8b0" stroke-width="1.6"/><path d="M1300.6 9.3H1313.2" stroke="#45a8b0" stroke-width="1.6"/><path d="M1304 13.1H1310.2M1304 16.7H1310.2M1304 20H1310.2" stroke="#45a8b0" stroke-width="1.5"/></svg>
</body></html>
